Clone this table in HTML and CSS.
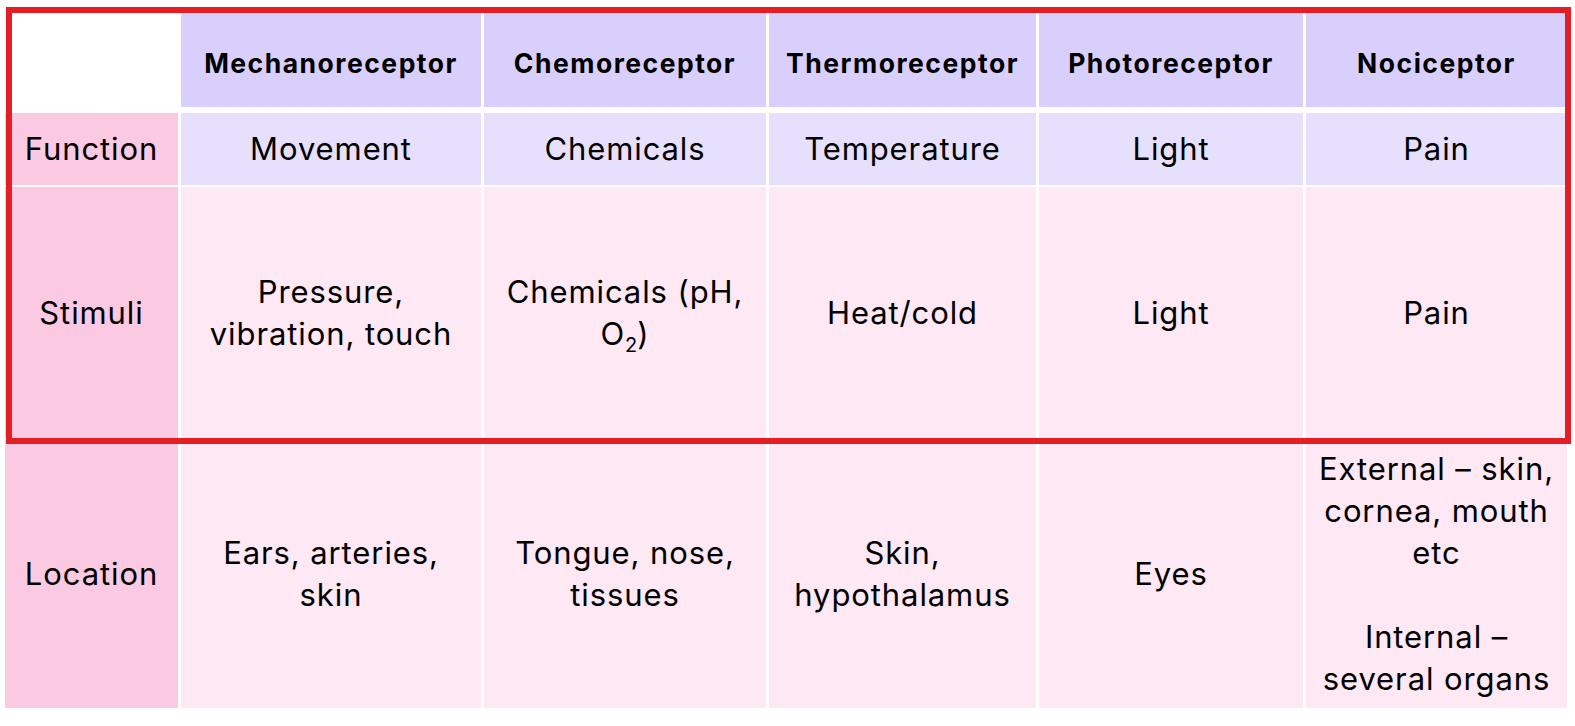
FILE: index.html
```html
<!DOCTYPE html>
<html lang="en">
<head>
<meta charset="utf-8">
<title>Receptors</title>
<link rel="stylesheet" href="styles.css">
</head>
<body>
<div class="page">
  <div class="table">
    <div class="cell corner"></div>
    <div class="cell head"><span>Mechanoreceptor</span></div>
    <div class="cell head"><span>Chemoreceptor</span></div>
    <div class="cell head"><span>Thermoreceptor</span></div>
    <div class="cell head"><span>Photoreceptor</span></div>
    <div class="cell head"><span>Nociceptor</span></div>

    <div class="cell label"><span>Function</span></div>
    <div class="cell func"><span>Movement</span></div>
    <div class="cell func"><span>Chemicals</span></div>
    <div class="cell func"><span>Temperature</span></div>
    <div class="cell func"><span>Light</span></div>
    <div class="cell func"><span>Pain</span></div>

    <div class="cell label"><span>Stimuli</span></div>
    <div class="cell body"><span>Pressure,<br>vibration, touch</span></div>
    <div class="cell body"><span>Chemicals (pH,<br>O<sub>2</sub>)</span></div>
    <div class="cell body"><span>Heat/cold</span></div>
    <div class="cell body"><span>Light</span></div>
    <div class="cell body"><span>Pain</span></div>

    <div class="cell label"><span>Location</span></div>
    <div class="cell body"><span>Ears, arteries,<br>skin</span></div>
    <div class="cell body"><span>Tongue, nose,<br>tissues</span></div>
    <div class="cell body"><span>Skin,<br>hypothalamus</span></div>
    <div class="cell body"><span>Eyes</span></div>
    <div class="cell body"><span>External – skin,<br>cornea, mouth<br>etc<br><br>Internal –<br>several organs</span></div>
  </div>
  <div class="highlight"></div>
</div>
</body>
</html>
```

FILE: styles.css
```css
html, body {
  margin: 0;
  padding: 0;
  background: #ffffff;
}

body {
  font-family: Inter, "Open Sans", "Liberation Sans", sans-serif;
  color: #000000;
}

.page {
  position: relative;
  width: 1575px;
  height: 726px;
  padding: 11px 0 0 5px;
  box-sizing: border-box;
}

.table {
  display: grid;
  grid-template-columns: 173px 300px 282px 267px 264px 261px;
  grid-template-rows: 100px 72px 251px 268px;
  column-gap: 3px;
  row-gap: 2px;
  width: max-content;
}

.cell {
  display: flex;
  align-items: center;
  justify-content: center;
  text-align: center;
  font-size: 31px;
  line-height: 42px;
  letter-spacing: 0.9px;
}

.corner {
  background: #ffffff;
}

.head {
  background: #d9cffd;
  background-clip: padding-box;
  border-bottom: 4px solid #ffffff;
  padding-top: 7px;
  font-size: 26.5px;
  font-weight: 700;
  letter-spacing: 1.5px;
}

.label {
  background: #fcc9e3;
}

.func {
  background: #e7e0fd;
}

.body {
  background: #fde8f4;
}

sub {
  font-size: 20px;
  line-height: 0;
  vertical-align: -7px;
  letter-spacing: 0;
}

.highlight {
  position: absolute;
  left: 6px;
  top: 7px;
  width: 1553px;
  height: 425px;
  border: 6px solid #e41e25;
  pointer-events: none;
}
```
